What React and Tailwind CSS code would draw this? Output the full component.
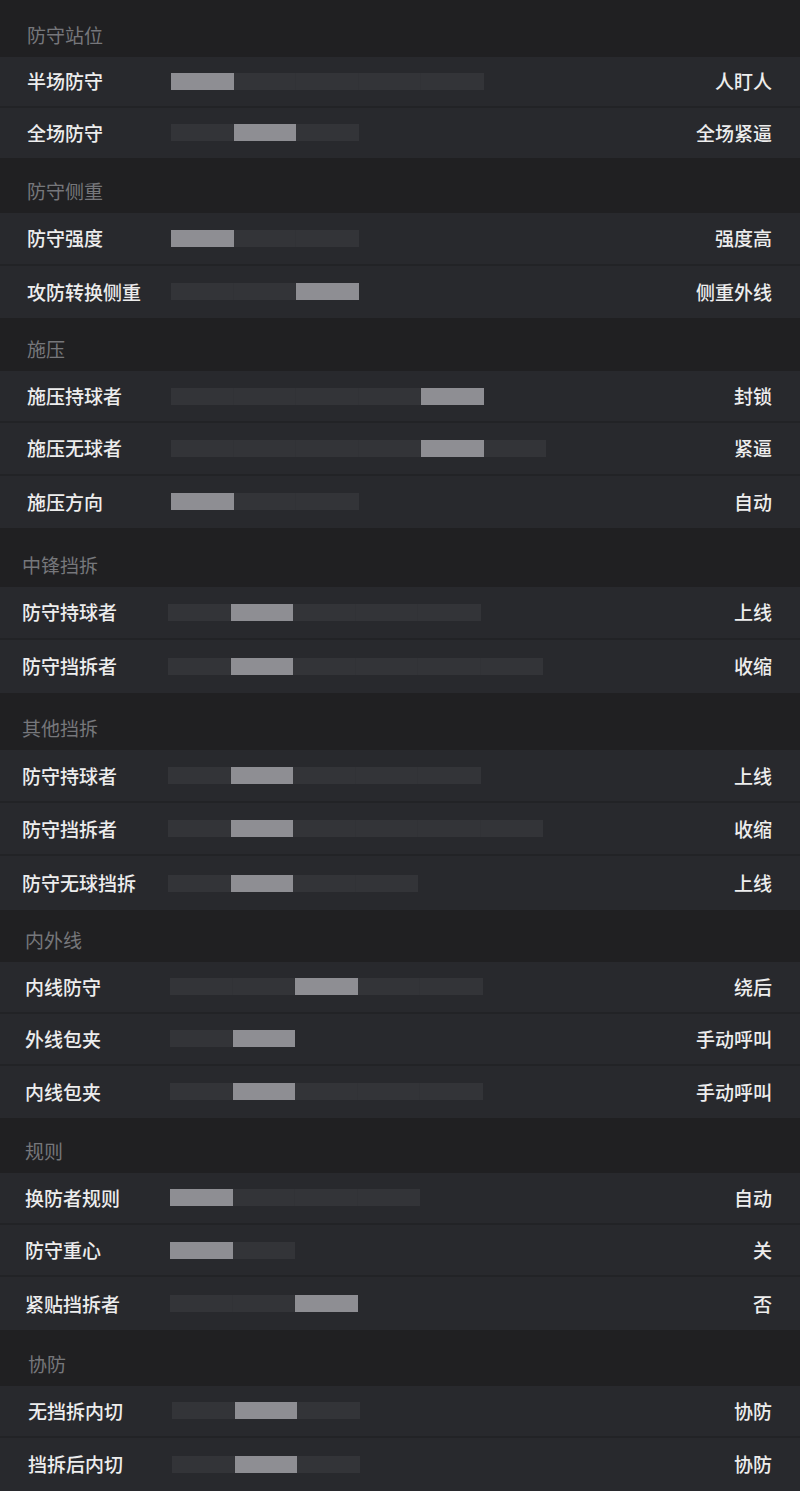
import React from "react";

const sections = [
  {
    title: "防守站位",
    head: "h-[57px] pl-[27px]",
    row: "h-[50.5px]",
    label: "w-[171px] pl-[27px]",
    rows: [
      ["半场防守", 5, 0, "人盯人"],
      ["全场防守", 3, 1, "全场紧逼"],
    ],
  },
  {
    title: "防守侧重",
    head: "h-[55px] pl-[27px]",
    row: "h-[52.5px]",
    label: "w-[171px] pl-[27px]",
    rows: [
      ["防守强度", 3, 0, "强度高"],
      ["攻防转换侧重", 3, 2, "侧重外线"],
    ],
  },
  {
    title: "施压",
    head: "h-[53px] pl-[27px]",
    row: "h-[52.3px]",
    label: "w-[171px] pl-[27px]",
    rows: [
      ["施压持球者", 5, 4, "封锁"],
      ["施压无球者", 6, 4, "紧逼"],
      ["施压方向", 3, 0, "自动"],
    ],
  },
  {
    title: "中锋挡拆",
    head: "h-[59px] pl-[22px]",
    row: "h-[53px]",
    label: "w-[168px] pl-[22px]",
    rows: [
      ["防守持球者", 5, 1, "上线"],
      ["防守挡拆者", 6, 1, "收缩"],
    ],
  },
  {
    title: "其他挡拆",
    head: "h-[57px] pl-[22px]",
    row: "h-[53.3px]",
    label: "w-[168px] pl-[22px]",
    rows: [
      ["防守持球者", 5, 1, "上线"],
      ["防守挡拆者", 6, 1, "收缩"],
      ["防守无球挡拆", 4, 1, "上线"],
    ],
  },
  {
    title: "内外线",
    head: "h-[52px] pl-[25px]",
    row: "h-[52px]",
    label: "w-[170px] pl-[25px]",
    rows: [
      ["内线防守", 5, 2, "绕后"],
      ["外线包夹", 2, 1, "手动呼叫"],
      ["内线包夹", 5, 1, "手动呼叫"],
    ],
  },
  {
    title: "规则",
    head: "h-[55px] pl-[25px]",
    row: "h-[52.3px]",
    label: "w-[170px] pl-[25px]",
    rows: [
      ["换防者规则", 4, 0, "自动"],
      ["防守重心", 2, 0, "关"],
      ["紧贴挡拆者", 3, 2, "否"],
    ],
  },
  {
    title: "协防",
    head: "h-[56px] pl-[28px]",
    row: "h-[52.5px]",
    label: "w-[172px] pl-[28px]",
    rows: [
      ["无挡拆内切", 3, 1, "协防"],
      ["挡拆后内切", 3, 1, "协防"],
    ],
  },
];

const Bar = ({ count, active }) => (
  <div className="flex h-[17px]">
    {Array.from({ length: count }).map((_, i) => (
      <div
        key={i}
        className={
          i === active
            ? "w-[62.5px] h-full bg-[#8e8e93]"
            : "w-[62.5px] h-full bg-[#333438] border-r border-[#313236] last:border-r-0"
        }
      />
    ))}
  </div>
);

export default function App() {
  return (
    <div className="w-[800px] h-[1491px] overflow-hidden bg-[#202022] font-['Noto_Sans_CJK_SC','Noto_Sans',sans-serif]">
      {sections.map((s, si) => (
        <div key={si} className="flex flex-col">
          <div className={`${s.head} flex items-end pb-[9px] text-[19px] leading-[26px] text-[#76777b]`}>
            {s.title}
          </div>
          {s.rows.map(([label, count, active, value], ri) => (
            <div
              key={ri}
              className={`${s.row} flex items-center bg-[#28292d] border-b-2 border-[#222326] last:border-b-0 pr-[28px]`}
            >
              <div className={`${s.label} shrink-0 text-[19px] leading-[26px] font-medium text-[#ededed]`}>
                {label}
              </div>
              <Bar count={count} active={active} />
              <div className="ml-auto text-[19px] leading-[26px] font-medium text-[#ededed]">{value}</div>
            </div>
          ))}
        </div>
      ))}
    </div>
  );
}
